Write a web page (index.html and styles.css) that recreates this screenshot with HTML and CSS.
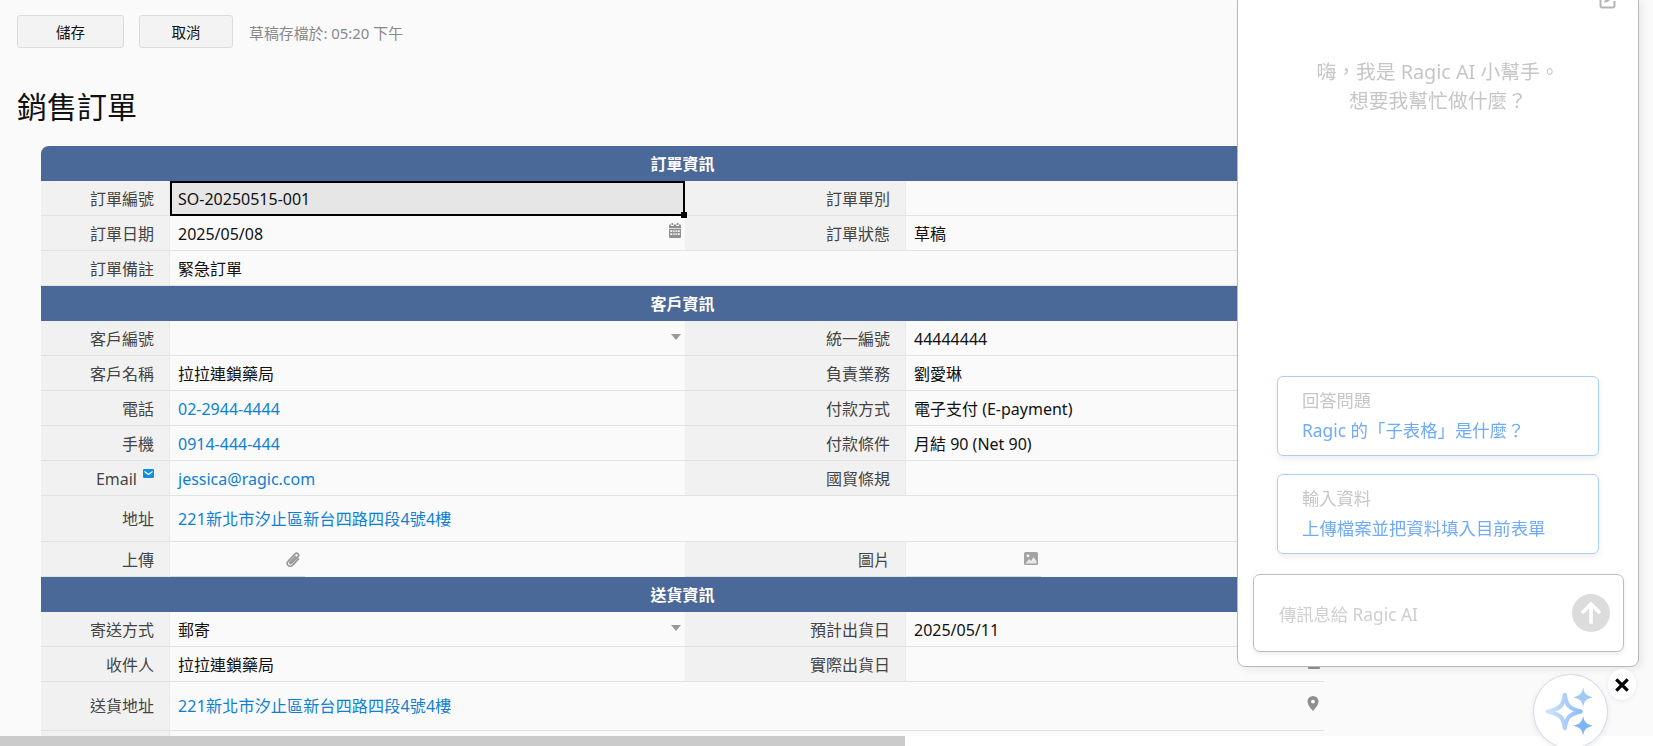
FILE: index.html
```html
<!DOCTYPE html>
<html lang="zh-Hant">
<head>
<meta charset="utf-8">
<title>銷售訂單</title>
<link rel="stylesheet" href="styles.css">
</head>
<body>
<main class="page">
  <div class="toolbar">
    <button class="btn btn-save">儲存</button>
    <button class="btn btn-cancel">取消</button>
    <span class="draft">草稿存檔於: 05:20 下午</span>
  </div>
  <h1 class="title">銷售訂單</h1>
  <div class="sheet">
    <div class="section first">訂單資訊</div>
    <div class="label">訂單編號</div><div class="value selected">SO-20250515-001<i class="handle"></i></div>
    <div class="label">訂單單別</div><div class="value"></div>

    <div class="label">訂單日期</div>
    <div class="value">2025/05/08
      <svg class="ic ic-right cal" viewBox="0 0 12 15"><path fill-rule="evenodd" d="M2.500 0h1.600v2H2.500zM7.900 0h1.600v2H7.900zM1 1.500h1v1.500h2.600V1.500h2.800V3H10V1.500h1a1 1 0 0 1 1 1V5H0V2.500a1 1 0 0 1 1-1zM0 5.800h12V14a1 1 0 0 1-1 1H1a1 1 0 0 1-1-1zM1.300 7.200v1.800h2V7.200zm3 0v1.800h1.300V7.200zm2.200 0v1.800h1.300V7.200zm2.200 0v1.800h2V7.200zm-7.400 3v1.800h2v-1.800zm3 0v1.800h1.300v-1.800zm2.200 0v1.800h1.300v-1.800zm2.200 0v1.800h2v-1.800z"/></svg>
    </div>
    <div class="label">訂單狀態</div><div class="value">草稿</div>

    <div class="label">訂單備註</div><div class="value wide">緊急訂單</div>

    <div class="section">客戶資訊</div>
    <div class="label">客戶編號</div><div class="value"><i class="caret"></i></div>
    <div class="label">統一編號</div><div class="value">44444444</div>

    <div class="label">客戶名稱</div><div class="value">拉拉連鎖藥局</div>
    <div class="label">負責業務</div><div class="value">劉愛琳</div>

    <div class="label">電話</div><div class="value"><a class="link">02-2944-4444</a></div>
    <div class="label">付款方式</div><div class="value">電子支付 (E-payment)</div>

    <div class="label">手機</div><div class="value"><a class="link">0914-444-444</a></div>
    <div class="label">付款條件</div><div class="value">月結 90 (Net 90)</div>

    <div class="label">Email<svg class="mail" viewBox="0 0 11 9"><rect width="11" height="9" rx="1" fill="#0e8fd8"/><path d="M1.500 2.500 5.500 5.500 9.500 2.500" fill="none" stroke="#fff" stroke-width="1.100"/></svg></div>
    <div class="value"><a class="link">jessica@ragic.com</a></div>
    <div class="label">國貿條規</div><div class="value"></div>

    <div class="label tall">地址</div><div class="value wide tall"><a class="link addr">221新北市汐止區新台四路四段4號4樓</a></div>

    <div class="label">上傳</div>
    <div class="value file">
      <svg class="ic-clip" viewBox="0 0 14 16"><path d="M11.800 7.400 6.700 12.900c-1.300 1.300-3 1.300-4 .3s-1-2.700.3-4l5.700-6c.9-.9 2-.9 2.700-.2s.7 1.800-.2 2.700L5.700 11.200c-.4.400-.9.400-1.200.1s-.3-.8.1-1.200l4.600-4.900" fill="none" stroke="#9a9a9a" stroke-width="1.500" stroke-linecap="round"/></svg>
    </div>
    <div class="label">圖片</div>
    <div class="value file">
      <svg class="ic-pic" viewBox="0 0 14 13"><rect width="14" height="13" rx="1.500" fill="#a3a3a3"/><circle cx="4" cy="3.800" r="1.400" fill="#fff"/><path d="M1.500 11.500 5 7l2 2L9.500 5 12.500 9v2.500z" fill="#e8e8e8"/></svg>
    </div>

    <div class="section">送貨資訊</div>
    <div class="label">寄送方式</div><div class="value">郵寄<i class="caret"></i></div>
    <div class="label">預計出貨日</div><div class="value">2025/05/11</div>

    <div class="label">收件人</div><div class="value">拉拉連鎖藥局</div>
    <div class="label">實際出貨日</div>
    <div class="value">
      <svg class="ic ic-right cal" viewBox="0 0 12 15"><path d="M0 5.800h12V14a1 1 0 0 1-1 1H1a1 1 0 0 1-1-1z"/></svg>
    </div>

    <div class="label taller">送貨地址</div>
    <div class="value wide taller"><a class="link addr">221新北市汐止區新台四路四段4號4樓</a>
      <svg class="ic ic-right pin" viewBox="0 0 12 15"><path fill-rule="evenodd" d="M6 0a5.500 5.500 0 0 1 5.500 5.500C11.500 9 8 12.500 6 15 4 12.500.5 9 .5 5.500A5.500 5.500 0 0 1 6 0zm0 3.700a1.900 1.900 0 1 0 0 3.800 1.900 1.900 0 0 0 0-3.800z"/></svg>
    </div>
    <div class="label"></div><div class="value wide"></div>
  </div>
</main>
<div class="scrollbar"><div class="thumb"></div></div>

<aside class="panel">
  <svg class="edit" viewBox="0 0 18 18"><path d="M8 2.500H3.500a2 2 0 0 0-2 2v10a2 2 0 0 0 2 2h10a2 2 0 0 0 2-2V10" fill="none" stroke="#b5b5b5" stroke-width="2"/><path d="M14 0l3 3-7.500 7.500L5 12l1.500-4.500z" fill="#b5b5b5"/></svg>
  <p class="hello">嗨，我是 Ragic AI 小幫手。<br>想要我幫忙做什麼？</p>
  <div class="suggest">
    <div class="card">
      <div class="card-title">回答問題</div>
      <div class="card-link">Ragic 的「子表格」是什麼？</div>
    </div>
    <div class="card">
      <div class="card-title">輸入資料</div>
      <div class="card-link">上傳檔案並把資料填入目前表單</div>
    </div>
  </div>
  <div class="composer">
    <span class="placeholder">傳訊息給 Ragic AI</span>
    <span class="send">
      <svg viewBox="0 0 20 20"><path d="M10 19V3M2.500 10 10 2.500 17.500 10" fill="none" stroke="#fff" stroke-width="3"/></svg>
    </span>
  </div>
</aside>

<button class="fab" aria-label="Ragic AI">
  <svg viewBox="0 0 48 48">
    <defs>
      <linearGradient id="g1" x1="0" y1="0" x2="1" y2="0"><stop offset="0" stop-color="#cfe2fb"/><stop offset="1" stop-color="#8fbdf8"/></linearGradient>
    </defs>
    <path d="M19 9.500C20.500 19 22.500 21.500 33 24 22.500 26.500 20.500 29 19 38.500 17.500 29 15.500 26.500 4 24 15.500 21.500 17.500 19 19 9.500z" fill="none" stroke="url(#g1)" stroke-width="3.600" stroke-linejoin="round"/>
    <path d="M35 3c1 5 2.500 7 8.500 8.500-6 1.500-7.500 3.500-8.500 8.500-1-5-2.500-7-8.500-8.500 6-1.500 7.500-3.500 8.500-8.500z" fill="#a3c9f9"/>
    <path d="M35 28c1 5 2.500 7 8.500 8.500-6 1.500-7.500 3.500-8.500 8.500-1-5-2.500-7-8.500-8.500 6-1.500 7.500-3.500 8.500-8.500z" fill="#7fb4f7"/>
  </svg>
</button>
<button class="close" aria-label="關閉">
  <svg viewBox="0 0 14 14"><path d="M2 2l10 10M12 2 2 12" stroke="#000" stroke-width="2.800" fill="none"/></svg>
</button>
</body>
</html>
```

FILE: styles.css
```css
* { box-sizing: border-box; }
html, body { margin: 0; height: 100%; overflow: hidden; background: #fff; }
body {
  font-family: "Noto Sans", "Noto Sans CJK TC", sans-serif;
  font-size: 16px;
  color: #222;
  line-height: 20px;
}
.page { height: 736px; background: #fafafa; overflow: hidden; padding: 15px 0 0 17px; }
.toolbar { display: flex; align-items: center; height: 33px; }
.btn {
  height: 33px;
  background: #f3f3f3;
  border: 1px solid #dcdcdc;
  border-radius: 3px;
  font: 14.500px "Noto Sans", "Noto Sans CJK TC", sans-serif;
  color: #111;
  padding: 0;
}
.btn-save { width: 107px; }
.btn-cancel { width: 94px; margin-left: 15px; }
.draft { margin-left: 16px; font-size: 14.900px; color: #888; padding-top: 2px; }
.title { margin: 35px 0 0; font-size: 30px; font-weight: 400; line-height: 48px; color: #111; height: 63px; }
.sheet {
  margin: 0 0 0 24px;
  width: 1283px;
  display: grid;
  grid-template-columns: 129px 515px 221px 418px;
}
.section {
  grid-column: 1 / -1;
  height: 35px;
  background: #4b6998;
  color: #fff;
  font-weight: 700;
  text-align: center;
  line-height: 36px;
  font-size: 16px;
}
.section.first { border-radius: 8px 8px 0 0; }
.label {
  height: 35px;
  background: #f1f1f1;
  border-bottom: 1px solid #e2e2e2;
  border-right: 1px solid #e8e8e8;
  padding-right: 15px;
  text-align: right;
  color: #444;
  font-size: 16px;
  line-height: 36px;
}
.value {
  position: relative;
  height: 35px;
  background: #fafafa;
  border-bottom: 1px solid #e2e2e2;
  padding-left: 8px;
  font-size: 16px;
  line-height: 36px;
  color: #111;
}
.wide { grid-column: span 3; }
.label.tall, .value.tall { height: 46px; line-height: 46px; }
.label.taller, .value.taller { height: 49px; line-height: 49px; }
.value.selected { background: #e6e6e6; border: 2px solid #000; padding-left: 6px; line-height: 32px; z-index: 1; }
.handle { position: absolute; right: -4px; bottom: -4px; width: 6px; height: 6px; background: #000; }
.link { color: #0e7fd3; }
.addr { letter-spacing: .2px; }
.ic { fill: #8f8f8f; }
.ic-right { position: absolute; }
.cal { right: 4px; top: 7px; width: 12px; height: 15px; }
.pin { right: 5px; top: 14px; width: 12px; height: 15px; }
.caret {
  position: absolute; right: 4px; top: 13px;
  border-left: 5px solid transparent; border-right: 5px solid transparent;
  border-top: 6px solid #999;
}
.mail { width: 11px; height: 9px; margin-left: 6px; vertical-align: 7px; }
.value.file { border-bottom-color: transparent; }
.value.file::after { content: ""; position: absolute; left: 0; bottom: -1px; width: 135px; height: 1px; background: #d8d8d8; }
.ic-clip { position: absolute; left: 115px; top: 8px; width: 16px; height: 19px; }
.ic-pic { position: absolute; left: 118px; top: 10px; width: 14px; height: 13px; }

.scrollbar { height: 10px; background: #fff; }
.thumb { width: 905px; height: 10px; background: #cbcbcb; }

.panel {
  position: fixed;
  left: 1237px; top: -1px;
  width: 402px; height: 668px;
  background: #fff;
  border: 1px solid #b9b9b9;
  border-radius: 0 0 8px 8px;
  box-shadow: 3px 2px 8px rgba(0,0,0,.08);
  z-index: 5;
}
.edit { position: absolute; left: 361px; top: -9px; width: 18px; height: 18px; }
.hello {
  position: absolute; left: 0; right: 0; top: 57px; margin: 0;
  text-align: center; font-size: 19.800px; line-height: 29px; color: #c6c6c6;
}
.suggest { position: absolute; left: 39px; top: 376px; width: 322px; display: flex; flex-direction: column; gap: 18px; }
.card {
  height: 80px;
  border: 1px solid #a9cffc;
  border-radius: 6px;
  padding: 12px 0 0 24px;
  background: #fff;
  box-shadow: 0 3px 6px rgba(0,0,0,.07);
}
.card-title { font-size: 17.300px; line-height: 24px; color: #c6c6c6; }
.card-link { font-size: 17.400px; line-height: 26px; margin-top: 4px; color: #6fabf8; }
.composer {
  position: absolute; left: 15px; top: 574px; width: 371px; height: 78px;
  border: 1px solid #bdbdbd; border-radius: 7px;
  box-shadow: 0 2px 5px rgba(0,0,0,.08);
  background: #fff;
}
.placeholder { position: absolute; left: 25px; top: 27px; font-size: 17.300px; line-height: 26px; color: #cfcfcf; }
.send {
  position: absolute; right: 13px; top: 19px;
  width: 38px; height: 38px; border-radius: 50%;
  background: #dcdcdc; display: flex; align-items: center; justify-content: center;
}
.send svg { width: 24px; height: 24px; }

.fab {
  position: fixed; left: 1533px; top: 674px;
  width: 75px; height: 75px; border-radius: 50%;
  border: 1px solid #cfd9e8; background: #fff; padding: 9px;
  box-shadow: 0 2px 6px rgba(0,0,0,.08);
  z-index: 6;
}
.fab svg { width: 100%; height: 100%; display: block; }
.close {
  position: fixed; left: 1608px; top: 669px;
  width: 28px; height: 31px; border-radius: 50%;
  border: 0; background: #fff; padding: 7px 6px;
  box-shadow: 0 1px 5px rgba(0,0,0,.08);
  z-index: 7;
}
.close svg { width: 16px; height: 16px; display: block; }
```
